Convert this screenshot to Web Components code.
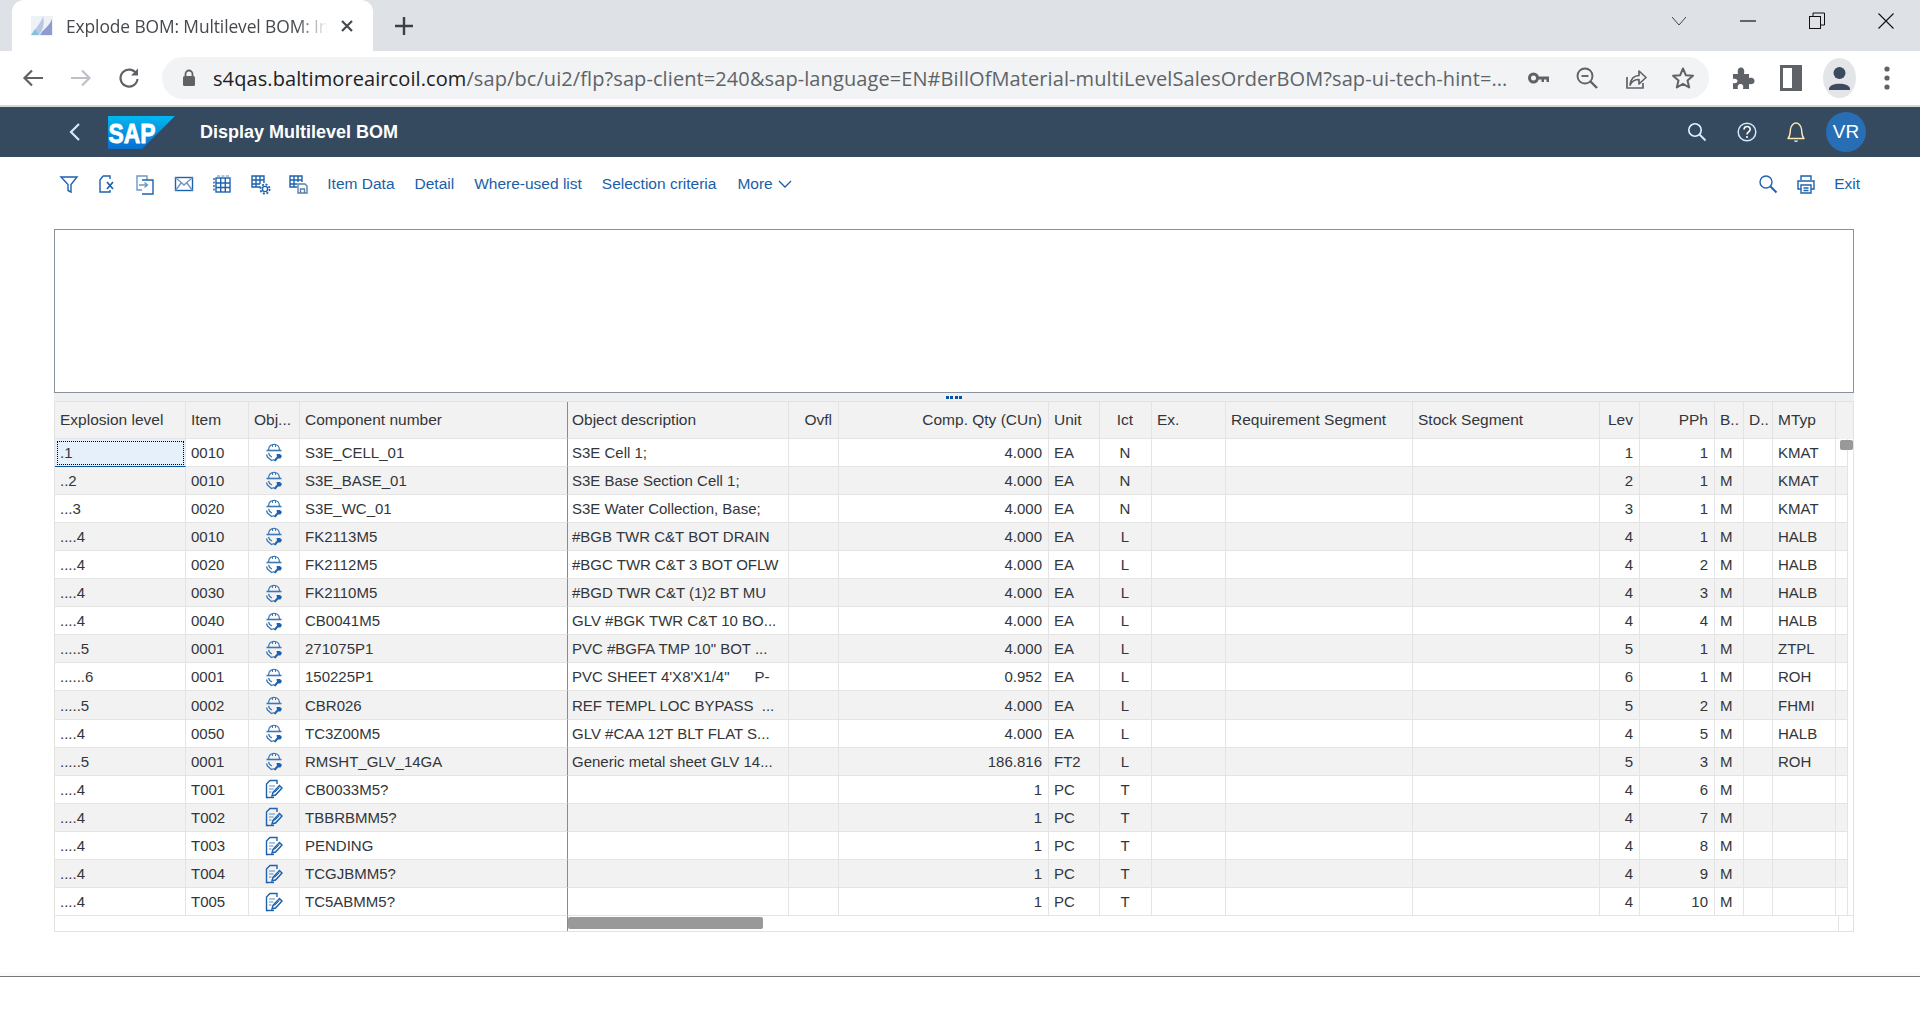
<!DOCTYPE html>
<html lang="en">
<head>
<meta charset="utf-8">
<title>Explode BOM: Multilevel BOM</title>
<style>
  html, body { margin: 0; padding: 0; background: #fff; }
  body { font-family: "Liberation Sans", Arial, sans-serif; overflow: hidden; }
</style>
</head>
<body>
<bom-page></bom-page>

<script>
class BrowserChrome extends HTMLElement {
  constructor() {
    super();
    const shadowRoot = this.attachShadow({ mode: "open" });
    shadowRoot.innerHTML = `
    <style>
      :host { display: block; height: 107px; font-family: "Open Sans", "Noto Sans", sans-serif; }
      .strip { height: 51px; background: #dee1e6; display: flex; align-items: flex-end; padding-left: 12px; }
      .tab { width: 361px; height: 51px; background: #fff; border-radius: 12px 12px 0 0; display: flex; align-items: center; box-sizing: border-box; padding-left: 18px; color: #45494d; font-size: 17.4px; }
      .tab svg.fav { flex: none; margin-right: 12px; }
      .title { width: 262px; white-space: nowrap; letter-spacing: -0.1px;
        -webkit-mask-image: linear-gradient(to right, #000 88%, transparent); mask-image: linear-gradient(to right, #000 88%, transparent); }
      .tab svg.close { margin-left: 12px; flex: none; }
      .plus { margin-left: 21px; margin-bottom: 15px; }
      .win { margin-left: auto; display: flex; height: 51px; align-items: center; padding-bottom: 9px; box-sizing: border-box; }
      .win svg { display: block; }
      .win .c { width: 69px; display: flex; justify-content: center; }
      .bar { height: 54px; background: #fff; display: flex; align-items: center; box-sizing: border-box; padding-left: 21px; }
      .nav { width: 48px; display: flex; justify-content: center; flex: none; }
      .nav:nth-child(1) { width: 24px; }
      .nav:nth-child(2) { margin-left: 12px; }
      .nav:nth-child(3) { margin-right: 9px; }
      .pill { width: 1547px; height: 42px; flex: none; background: #f1f3f4; border-radius: 21px; display: flex; align-items: center; box-sizing: border-box; padding-left: 20px; }
      .url { width: 1294px; margin-left: 17px; margin-right: 8px; font-size: 20px; color: #5f6368; white-space: nowrap; overflow: hidden; letter-spacing: 0.09px; }
      .url b { font-weight: 400; color: #202124; }
      .pill .i { width: 48px; flex: none; display: flex; justify-content: center; }
      .tools { display: flex; align-items: center; margin-left: 10px; }
      .tools .i { width: 48px; display: flex; justify-content: center; flex: none; }
      .line { height: 2px; background: #d6d6d6; }
    </style>
    <div class="strip">
      <div class="tab">
        <svg class="fav" width="24" height="24" viewBox="0 0 24 24">
          <rect x="1" y="2" width="22" height="20" fill="#eef2f7"/>
          <path d="M3 21 C6 12 12 8 13 2 C15 9 13 16 9 21Z" fill="#b9c7e6"/>
          <path d="M10 21 C13 15 19 13 22 5 L22 21Z" fill="#8f9ad3"/>
          <path d="M1 21 L5 15 L9 21Z" fill="#7fc3de"/>
        </svg>
        <span class="title">Explode BOM: Multilevel BOM: In</span>
        <svg class="close" width="14" height="14" viewBox="0 0 14 14"><path d="M2 2 L12 12 M12 2 L2 12" stroke="#45494d" stroke-width="2.2"/></svg>
      </div>
      <svg class="plus" width="20" height="20" viewBox="0 0 20 20"><path d="M10 1 V19 M1 10 H19" stroke="#3c4043" stroke-width="2.4"/></svg>
      <div class="win">
        <div class="c"><svg width="16" height="10" viewBox="0 0 16 10"><path d="M1 1 L8 9 L15 1" fill="none" stroke="#444" stroke-width="1"/></svg></div>
        <div class="c"><svg width="16" height="4" viewBox="0 0 16 4"><path d="M0 2 H16" stroke="#111" stroke-width="1.2"/></svg></div>
        <div class="c"><svg width="16" height="18" viewBox="0 0 16 18"><rect x="0.5" y="4.5" width="11" height="12" fill="none" stroke="#111"/><path d="M4 4 V1 H15.5 V13 H12" fill="none" stroke="#111"/></svg></div>
        <div class="c"><svg width="16" height="16" viewBox="0 0 16 16"><path d="M0.5 0.5 L15.5 15.5 M15.5 0.5 L0.5 15.5" stroke="#111" stroke-width="1.1"/></svg></div>
      </div>
    </div>
    <div class="bar">
      <div class="nav"><svg width="22" height="18" viewBox="0 0 22 18"><path d="M21 9 H3 M10 1.5 L2.5 9 L10 16.5" fill="none" stroke="#5f6368" stroke-width="2.2"/></svg></div>
      <div class="nav"><svg width="22" height="18" viewBox="0 0 22 18"><path d="M1 9 H19 M12 1.5 L19.5 9 L12 16.5" fill="none" stroke="#bdc1c6" stroke-width="2.2"/></svg></div>
      <div class="nav"><svg width="22" height="22" viewBox="0 0 22 22"><path d="M18.5 7 A8.5 8.5 0 1 0 19.5 12" fill="none" stroke="#5f6368" stroke-width="2.2"/><path d="M20 1.5 V8.5 H13Z" fill="#5f6368"/></svg></div>
      <div class="pill">
        <svg width="14" height="18" viewBox="0 0 14 18"><path d="M3.5 7 V5 A3.5 3.5 0 0 1 10.5 5 V7" fill="none" stroke="#5f6368" stroke-width="1.8"/><rect x="1" y="7" width="12" height="10" rx="1.5" fill="#5f6368"/></svg>
        <span class="url"><b>s4qas.baltimoreaircoil.com</b>/sap/bc/ui2/flp?sap-client=240&amp;sap-language=EN#BillOfMaterial-multiLevelSalesOrderBOM?sap-ui-tech-hint=...</span>
        <div class="i"><svg width="22" height="12" viewBox="0 0 22 12"><circle cx="5.5" cy="6" r="4" fill="none" stroke="#5f6368" stroke-width="3"/><path d="M9 4.5 H21 V10 H18.5 V7.5 H16 V10 H13.5 V7.5 H9Z" fill="#5f6368"/></svg></div>
        <div class="i"><svg width="22" height="22" viewBox="0 0 22 22"><circle cx="9" cy="9" r="7.5" fill="none" stroke="#5f6368" stroke-width="1.9"/><path d="M5.5 9 H12.5" stroke="#5f6368" stroke-width="1.9"/><path d="M14.5 14.5 L21 21" stroke="#5f6368" stroke-width="2.4"/></svg></div>
        <div class="i"><svg width="24" height="24" viewBox="0 0 24 24"><path d="M4 11 V22 H20 V17" fill="none" stroke="#5f6368" stroke-width="1.7"/><path d="M7 19 C8 12 12 9.5 16 9.5 V5 L23 11.5 L16 18 V13.5 C12 13.5 9 15 7 19Z" fill="none" stroke="#5f6368" stroke-width="1.7" stroke-linejoin="round"/></svg></div>
        <div class="i"><svg width="24" height="24" viewBox="0 0 24 24"><path d="M12 2.5 L14.8 9.2 L22 9.8 L16.5 14.5 L18.2 21.5 L12 17.8 L5.8 21.5 L7.5 14.5 L2 9.8 L9.2 9.2Z" fill="none" stroke="#5f6368" stroke-width="2" stroke-linejoin="round"/></svg></div>
      </div>
      <div class="tools">
        <div class="i"><svg width="24" height="24" viewBox="0 0 24 24"><path d="M2 8 H7 C6 3 8 1.5 10 1.5 C12 1.5 14 3 13 8 H18 V12 C23 11 23.5 14 23.5 15 C23.5 16 23 19 18 18 V23 H12 C13 19 11 18 9.5 18 C8 18 6 19 7 23 H2 V17 C5 18 6.5 16 6.5 15 C6.5 14 5 12 2 13Z" fill="#5f6368"/></svg></div>
        <div class="i"><svg width="22" height="26" viewBox="0 0 22 26"><rect width="22" height="26" fill="#5f6368"/><rect x="3" y="3" width="9" height="20" fill="#fff"/></svg></div>
        <div class="i"><svg width="33" height="40" viewBox="0 0 33 40"><ellipse cx="16.5" cy="20" rx="16.5" ry="20" fill="#e3e5e9"/><circle cx="16.5" cy="15" r="6" fill="#3c4a5f"/><path d="M6 31 C6 24 27 24 27 31 V32 H6Z" fill="#3c4a5f"/></svg></div>
        <div class="i"><svg width="6" height="24" viewBox="0 0 6 24"><circle cx="3" cy="3" r="2.6" fill="#5f6368"/><circle cx="3" cy="12" r="2.6" fill="#5f6368"/><circle cx="3" cy="21" r="2.6" fill="#5f6368"/></svg></div>
      </div>
    </div>
    <div class="line"></div>`;
  }
}

class SapShell extends HTMLElement {
  constructor() {
    super();
    const shadowRoot = this.attachShadow({ mode: "open" });
    shadowRoot.innerHTML = `
    <style>
      :host { display: flex; align-items: center; height: 50px; background: #354a5f; color: #fff; box-sizing: border-box; padding-left: 68px; }
      .back { margin-right: 26px; }
      .logo { margin-right: 25px; display: block; }
      .logo text { font-family: "Liberation Sans", Arial, sans-serif; font-weight: 700; font-size: 28px; fill: #fff; stroke: #fff; stroke-width: 0.9; }
      .title { font-size: 18px; font-weight: 700; white-space: nowrap; }
      .right { margin-left: auto; display: flex; align-items: center; padding-right: 54px; }
      .i { width: 49.5px; display: flex; justify-content: center; }
      .avatar { width: 40px; height: 40px; border-radius: 50%; background: #286eb4; display: flex; align-items: center; justify-content: center; font-size: 19px; margin-left: 5px; }
    </style>
    <svg class="back" width="14" height="20" viewBox="0 0 14 20"><path d="M11 2 L3 10 L11 18" fill="none" stroke="#d1e8ff" stroke-width="2.2"/></svg>
    <svg class="logo" width="67" height="33" viewBox="0 0 67 33">
      <defs><linearGradient id="g" x1="0" y1="0" x2="0" y2="1"><stop offset="0" stop-color="#00b8f1"/><stop offset="1" stop-color="#0a6ed1"/></linearGradient></defs>
      <path d="M0 0 H67 L34 33 H0Z" fill="url(#g)"/>
      <text x="0.5" y="27" textLength="47" lengthAdjust="spacingAndGlyphs">SAP</text>
    </svg>
    <span class="title"><slot></slot></span>
    <div class="right">
      <div class="i"><svg width="20" height="20" viewBox="0 0 20 20"><circle cx="8" cy="8" r="6.2" fill="none" stroke="#e5f3ff" stroke-width="1.6"/><path d="M12.5 12.5 L18.5 18.5" stroke="#d1e8ff" stroke-width="2"/></svg></div>
      <div class="i"><svg width="20" height="22" viewBox="0 0 20 22"><circle cx="10" cy="11" r="8.8" fill="none" stroke="#d1e8ff" stroke-width="1.5"/><path d="M7 8.5 C7 4.5 13.2 4.5 13.2 8.3 C13.2 11 10 10.8 10 13.5" fill="none" stroke="#fff" stroke-width="1.6"/><circle cx="10" cy="16" r="1.1" fill="#fff"/></svg></div>
      <div class="i"><svg width="18" height="22" viewBox="0 0 18 22"><path d="M1 17.5 C3.5 15 3 12 3.5 8 C4 4.5 6.5 2 9 2 C11.5 2 14 4.5 14.5 8 C15 12 14.5 15 17 17.5Z" fill="none" stroke="#ffe9b0" stroke-width="1.4" stroke-linejoin="round"/><path d="M7 19.5 C7.5 21.5 10.5 21.5 11 19.5Z" fill="#d1e8ff"/></svg></div>
      <div class="avatar">VR</div>
    </div>`;
  }
}

class ToolIcon extends HTMLElement {
  constructor() {
    super();
    const shadowRoot = this.attachShadow({ mode: "open" });
    shadowRoot.innerHTML = `
    <style>
      :host { display: flex; justify-content: center; align-items: center; width: 38.2px; height: 24px; flex: none; }
      svg { display: block; fill: none; stroke: #1d62ad; stroke-width: 1.4; }
    </style>
    <svg width="22" height="22" viewBox="0 0 22 22">${ToolIcon.paths[this.getAttribute("name")] || ""}</svg>`;
  }
}
ToolIcon.paths = {
  filter: '<path d="M3 4 H19 L13 11.5 V19 L10 17.5 V11.5Z"/>',
  clear: '<path d="M7 3 H14 V6 M7 3 L4 7 V19 H14 V17"/><path d="M11 9 L17 16 M17 9 L11 16" stroke-width="1.7"/>',
  transfer: '<path d="M8 17 H3 V3 H13 V7" stroke="#6f97c4"/><path d="M8 7 H19 V21 H8" /><path d="M5 12 H13 M10.5 9.5 L13.5 12 L10.5 14.5" stroke="#6f97c4"/>',
  mail: '<rect x="2.5" y="4.5" width="17" height="13"/><path d="M2.5 4.5 L11 12 L19.5 4.5 M2.5 17.5 L8 10 M19.5 17.5 L14 10" stroke="#6f97c4"/>',
  grid: '<rect x="5" y="5" width="14" height="14"/><path d="M5 10 H19 M5 14.5 H19 M9.7 5 V19 M14.3 5 V19"/><path d="M3 5 V19" stroke-dasharray="2 1.5"/><path d="M6 3 H18" stroke-dasharray="3 1.5" stroke="#8fb2d8"/>',
  gridset: '<path d="M11 14 H3 V3 H15 V10 M3 7 H15 M3 11 H11 M7 3 V14 M11 3 V11"/><circle cx="16" cy="16" r="2.6"/><circle cx="16" cy="16" r="4.6" stroke-dasharray="2 1.6" stroke-width="1.8"/>',
  gridsave: '<path d="M10 14 H3 V3 H15 V9 M3 7 H15 M3 11 H10 M7 3 V14 M11 3 V9"/><path d="M11 11 H18 L20 13 V20 H11Z" stroke="#5a7fa8"/><path d="M13.5 20 V16 H17.5 V20" stroke="#5a7fa8"/>',
  search: '<circle cx="9" cy="9" r="6"/><path d="M13.5 13.5 L19.5 19.5" stroke-width="2"/>',
  print: '<path d="M6 7 V3 H16 V7 M6 16 H3 V8 H19 V16 H16"/><path d="M6 12 H16 V20 H6Z"/><path d="M8.5 15 H13.5 M8.5 17.5 H13.5"/>'
};

class ToolLink extends HTMLElement {
  constructor() {
    super();
    const shadowRoot = this.attachShadow({ mode: "open" });
    shadowRoot.innerHTML = `
    <style>
      :host { display: flex; align-items: center; color: #1a5ea8; font-size: 15.5px; white-space: nowrap; flex: none; gap: 5px; }
    </style>
    <slot></slot>`;
  }
}

class SapToolbar extends HTMLElement {
  constructor() {
    super();
    const shadowRoot = this.attachShadow({ mode: "open" });
    shadowRoot.innerHTML = `
    <style>
      :host { display: flex; align-items: center; height: 54px; box-sizing: border-box; padding-left: 50px; padding-right: 60px; gap: 20px; font-family: "Liberation Sans", Arial, sans-serif; }
      .icons { display: flex; margin-right: -10px; }
      .end { margin-left: auto; display: flex; align-items: center; }
      .end tool-link { margin-left: 9px; }
      .more { margin-left: 1px; }
    </style>
    <div class="icons">
      <tool-icon name="filter"></tool-icon>
      <tool-icon name="clear"></tool-icon>
      <tool-icon name="transfer"></tool-icon>
      <tool-icon name="mail"></tool-icon>
      <tool-icon name="grid"></tool-icon>
      <tool-icon name="gridset"></tool-icon>
      <tool-icon name="gridsave"></tool-icon>
    </div>
    <tool-link>Item Data</tool-link>
    <tool-link>Detail</tool-link>
    <tool-link>Where-used list</tool-link>
    <tool-link>Selection criteria</tool-link>
    <tool-link class="more">More <svg width="14" height="8" viewBox="0 0 14 8"><path d="M1 1 L7 7 L13 1" fill="none" stroke="#1a5ea8" stroke-width="1.3"/></svg></tool-link>
    <div class="end">
      <tool-icon name="search"></tool-icon>
      <tool-icon name="print"></tool-icon>
      <tool-link>Exit</tool-link>
    </div>`;
  }
}

const BOM_COLUMNS = [
  ["Explosion level", 131], ["Item", 63], ["Obj...", 51, "ic"], ["Component number", 268],
  ["Object description", 221], ["Ovfl", 50, "r"], ["Comp. Qty (CUn)", 210, "r"], ["Unit", 51],
  ["Ict", 52, "c"], ["Ex.", 74], ["Requirement Segment", 187], ["Stock Segment", 187],
  ["Lev", 40, "r"], ["PPh", 75, "r"], ["B..", 29], ["D..", 29], ["MTyp", 63], ["", 3]
];

const BOM_ROWS = [
  [".1", "0010", "a", "S3E_CELL_01", "S3E Cell 1;", "", "4.000", "EA", "N", "", "", "", "1", "1", "M", "", "KMAT"],
  ["..2", "0010", "a", "S3E_BASE_01", "S3E Base Section Cell 1;", "", "4.000", "EA", "N", "", "", "", "2", "1", "M", "", "KMAT"],
  ["...3", "0020", "a", "S3E_WC_01", "S3E Water Collection, Base;", "", "4.000", "EA", "N", "", "", "", "3", "1", "M", "", "KMAT"],
  ["....4", "0010", "a", "FK2113M5", "#BGB TWR C&T BOT DRAIN", "", "4.000", "EA", "L", "", "", "", "4", "1", "M", "", "HALB"],
  ["....4", "0020", "a", "FK2112M5", "#BGC TWR C&T 3 BOT OFLW", "", "4.000", "EA", "L", "", "", "", "4", "2", "M", "", "HALB"],
  ["....4", "0030", "a", "FK2110M5", "#BGD TWR C&T (1)2 BT MU", "", "4.000", "EA", "L", "", "", "", "4", "3", "M", "", "HALB"],
  ["....4", "0040", "a", "CB0041M5", "GLV #BGK TWR C&T 10 BO...", "", "4.000", "EA", "L", "", "", "", "4", "4", "M", "", "HALB"],
  [".....5", "0001", "a", "271075P1", "PVC #BGFA TMP 10\" BOT ...", "", "4.000", "EA", "L", "", "", "", "5", "1", "M", "", "ZTPL"],
  ["......6", "0001", "a", "150225P1", "PVC SHEET 4'X8'X1/4\"      P-", "", "0.952", "EA", "L", "", "", "", "6", "1", "M", "", "ROH"],
  [".....5", "0002", "a", "CBR026", "REF TEMPL LOC BYPASS  ...", "", "4.000", "EA", "L", "", "", "", "5", "2", "M", "", "FHMI"],
  ["....4", "0050", "a", "TC3Z00M5", "GLV #CAA 12T BLT FLAT S...", "", "4.000", "EA", "L", "", "", "", "4", "5", "M", "", "HALB"],
  [".....5", "0001", "a", "RMSHT_GLV_14GA", "Generic metal sheet GLV 14...", "", "186.816", "FT2", "L", "", "", "", "5", "3", "M", "", "ROH"],
  ["....4", "T001", "b", "CB0033M5?", "", "", "1", "PC", "T", "", "", "", "4", "6", "M", "", ""],
  ["....4", "T002", "b", "TBBRBMM5?", "", "", "1", "PC", "T", "", "", "", "4", "7", "M", "", ""],
  ["....4", "T003", "b", "PENDING", "", "", "1", "PC", "T", "", "", "", "4", "8", "M", "", ""],
  ["....4", "T004", "b", "TCGJBMM5?", "", "", "1", "PC", "T", "", "", "", "4", "9", "M", "", ""],
  ["....4", "T005", "b", "TC5ABMM5?", "", "", "1", "PC", "T", "", "", "", "4", "10", "M", "", ""]
];

const HAT_ICON = `<svg width="18" height="20" viewBox="0 0 18 20" fill="none" stroke="#3d78b5" stroke-width="1.3">
  <path d="M3.5 8 C3.5 0.5 14.5 0.5 14.5 8"/><path d="M7.5 2 V5 M10.5 2 V5" stroke-width="1"/><path d="M1.5 8.5 H16.5" stroke-width="1.6"/>
  <path d="M3.5 11 C4 13 5.5 14.5 7 15"/><path d="M1.5 12.5 L2.5 15 L6.5 18.5 L9 17.5"/>
  <path d="M8.5 18.5 L12 14.5 L11.5 12 L15 12 L17 14 L15.5 16.5 L13 16.5 L10.5 19.5Z" fill="#1d62ad" stroke="none"/></svg>`;
const DOC_ICON = `<svg width="18" height="20" viewBox="0 0 18 20" fill="none" stroke="#1d62ad" stroke-width="1.4">
  <path d="M3 18.5 H1.5 V5 L5 1.5 H12 V5"/><path d="M4 7 H10 M4 10 H8.5 M4 13 H6.5" stroke-width="1.1" stroke="#5a8fc8"/><path d="M2 18.5 H9"/>
  <path d="M7 17 L8 13.5 L14.5 6.5 L17 9 L10.5 16Z" stroke-width="1.5"/><path d="M9.5 13.5 L14.5 8.5" stroke-width="1"/></svg>`;

class BomTable extends HTMLElement {
  constructor() {
    super();
    const shadowRoot = this.attachShadow({ mode: "open" });
    const cols = BOM_COLUMNS.map((c) => c[1] + "px").join(" ") + " 15px";
    shadowRoot.innerHTML = `
    <style>
      :host { display: block; width: 1800px; font-family: "Liberation Sans", Arial, sans-serif; font-size: 15px; color: #32363a; }
      .splitter { height: 8px; background: #eef0f1; display: flex; justify-content: center; align-items: center; gap: 1.5px; border-bottom: 1px solid #e2e2e2; }
      .splitter i { width: 3px; height: 3px; background: #0854a0; display: block; }
      .grid { display: grid; grid-template-columns: ${cols}; grid-template-rows: 36.5px repeat(17, 28.12px) 14.5px; border-bottom: 1px solid #e2e2e2; border-left: 1px solid #e2e2e2; box-sizing: border-box; width: 1800px; }
      .cell { box-sizing: border-box; padding: 0 6px 0 5px; border-right: 1px solid #e4e4e4; border-bottom: 1px solid #e4e4e4; display: flex; align-items: center; white-space: pre; overflow: hidden; min-width: 0; }
      .head { background: #f2f2f2; color: #32363a; border-bottom: 1px solid #e4e4e4; font-size: 15.5px; }
      .alt { background: #f2f2f2; }
      .r { justify-content: flex-end; }
      .c, .ic { justify-content: center; }
      .desc { padding-left: 4px; }
      .fix { border-right: 1px solid #8a8a8a; }
      .focus { background: #e5f0fa; outline: 1px dotted #000; outline-offset: -3px; border-bottom: 1px solid #0854a0; }
      .vbar { grid-column: 19; grid-row: 2 / 19; border-right: 1px solid #e2e2e2; border-bottom: 1px solid #e4e4e4; box-sizing: border-box; padding: 1px 0 0 1px; }
      .vbar i { display: block; width: 13px; height: 10px; background: #999; border-radius: 2px; }
      .corner { background: #f2f2f2; border-right: 1px solid #e2e2e2; }
      .left { grid-column: 1 / 5; grid-row: 19; border-right: 1px solid #8a8a8a; }
      .hbar { grid-column: 5 / 19; grid-row: 19; padding: 1px 0 0; border-right: 1px solid #e4e4e4; box-sizing: border-box; }
      .hbar i { display: block; width: 195px; height: 12px; margin-left: 0; background: #999; border-radius: 2px; }
      .end { grid-column: 19; grid-row: 19; border-right: 1px solid #e2e2e2; }
    </style>
    <div class="splitter"><i></i><i></i><i></i><i></i></div>
    <div class="grid"></div>`;
    const grid = shadowRoot.querySelector(".grid");

    BOM_COLUMNS.forEach((col, i) => {
      const cell = document.createElement("div");
      cell.className = "cell head " + (col[2] === "ic" ? "" : col[2] || "") + (i === 3 ? " fix" : "") + (i === 4 ? " desc" : "");
      cell.textContent = col[0];
      grid.appendChild(cell);
    });
    const corner = document.createElement("div");
    corner.className = "corner";
    grid.appendChild(corner);

    BOM_ROWS.forEach((row, r) => {
      row.concat([""]).forEach((value, i) => {
        const cell = document.createElement("div");
        const kind = BOM_COLUMNS[i][2] || "";
        cell.className = "cell " + kind + (r % 2 ? " alt" : "") + (i === 3 ? " fix" : "") + (i === 4 ? " desc" : "");
        if (r === 0 && i === 0) cell.className += " focus";
        if (kind === "ic") cell.innerHTML = value === "a" ? HAT_ICON : DOC_ICON;
        else cell.textContent = value;
        grid.appendChild(cell);
      });
    });

    grid.insertAdjacentHTML("beforeend", `
      <div class="vbar"><i></i></div>
      <div class="left"></div>
      <div class="hbar"><i></i></div>
      <div class="end"></div>`);
  }
}

class BomPage extends HTMLElement {
  constructor() {
    super();
    const shadowRoot = this.attachShadow({ mode: "open" });
    shadowRoot.innerHTML = `
    <style>
      :host { display: flex; flex-direction: column; height: 1020px; overflow: hidden; }
      .content { padding: 18px 0 0 54px; display: flex; flex-direction: column; }
      .message { width: 1800px; height: 164px; box-sizing: border-box; border: 1px solid #89919a; background: #fff; }
      .foot { margin-top: 44px; height: 1px; background: #777; box-shadow: 0 -2px 3px rgba(0,0,0,.08); }
    </style>
    <browser-chrome></browser-chrome>
    <sap-shell>Display Multilevel BOM</sap-shell>
    <sap-toolbar></sap-toolbar>
    <div class="content">
      <div class="message"></div>
      <bom-table></bom-table>
    </div>
    <div class="foot"></div>`;
  }
}

window.customElements.define("browser-chrome", BrowserChrome);
window.customElements.define("sap-shell", SapShell);
window.customElements.define("tool-icon", ToolIcon);
window.customElements.define("tool-link", ToolLink);
window.customElements.define("sap-toolbar", SapToolbar);
window.customElements.define("bom-table", BomTable);
window.customElements.define("bom-page", BomPage);
</script>
</body>
</html>
